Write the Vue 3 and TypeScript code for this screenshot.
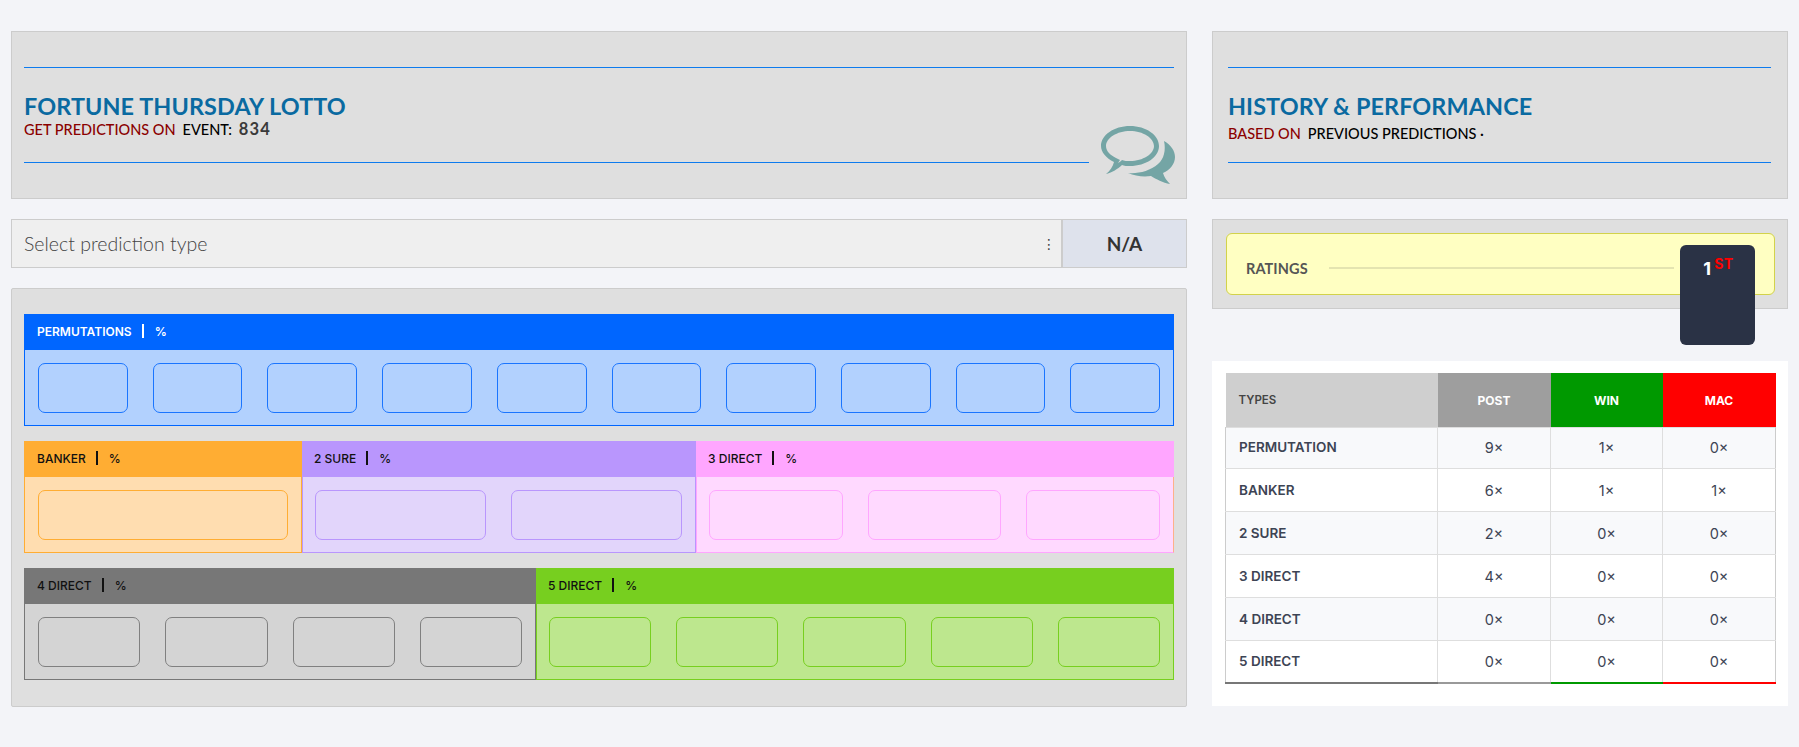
<script setup lang="ts">
interface Block { name: string; cls: string; count: number; basis: number; light?: boolean }
const rows: Block[][] = [
  [{ name: 'PERMUTATIONS', cls: 'blue', count: 10, basis: 1150, light: true }],
  [
    { name: 'BANKER', cls: 'orange', count: 1, basis: 278 },
    { name: '2 SURE', cls: 'purple', count: 2, basis: 394 },
    { name: '3 DIRECT', cls: 'pink', count: 3, basis: 478 },
  ],
  [
    { name: '4 DIRECT', cls: 'grey', count: 4, basis: 512 },
    { name: '5 DIRECT', cls: 'green', count: 5, basis: 638 },
  ],
]
const table: [string, string, string, string][] = [
  ['PERMUTATION', '9×', '1×', '0×'],
  ['BANKER', '6×', '1×', '1×'],
  ['2 SURE', '2×', '0×', '0×'],
  ['3 DIRECT', '4×', '0×', '0×'],
  ['4 DIRECT', '0×', '0×', '0×'],
  ['5 DIRECT', '0×', '0×', '0×'],
]
</script>

<template>
  <div class="page">
    <div class="col">
      <section class="card head-card">
        <div class="rule"></div>
        <div class="head-text">
          <h1>FORTUNE THURSDAY LOTTO</h1>
          <p class="sub">
            <span class="red">GET PREDICTIONS ON</span>
            <span class="black">EVENT:</span>
            <span class="num">834</span>
          </p>
        </div>
        <div class="rule short"></div>
        <svg class="chat" viewBox="0 0 74 58" width="74" height="58" aria-hidden="true">
          <path fill="#74a5a5" fill-rule="evenodd" d="M29 0C45 0 58 9 58 20C58 31 45 40 29 40C26 40 23 40 21 39C17 43 10 47 5 48C9 45 12 40 13 36C5 32 0 26 0 20C0 9 13 0 29 0ZM29 5C16 5 5 12 5 20C5 25 9 29 15 32L19 34L17 37C19 36 20 35 21 34C23 35 26 35 29 35C42 35 53 28 53 20C53 12 42 5 29 5Z" />
          <path fill="#74a5a5" d="M63 15C70 19 74 25 74 31C74 38 69 44 62 47C63 51 66 55 69 58C62 57 55 53 50 50C42 51 34 50 27 47C37 48 49 45 57 38C63 33 65 24 63 15Z" />
        </svg>
      </section>

      <div class="select">
        <span class="placeholder">Select prediction type</span>
        <span class="dots">⋮</span>
        <span class="na">N/A</span>
      </div>

      <section class="card panel">
        <div v-for="(row, i) in rows" :key="i" class="row">
          <div
            v-for="b in row"
            :key="b.name"
            class="block"
            :class="b.cls"
            :style="{ width: b.basis + 'px' }"
          >
            <div class="block-head" :class="{ light: b.light }">
              <span>{{ b.name }}</span>
              <i class="bar"></i>
              <span>%</span>
            </div>
            <div class="block-body">
              <div v-for="n in b.count" :key="n" class="slot"></div>
            </div>
          </div>
        </div>
      </section>
    </div>

    <div class="col">
      <section class="card head-card right">
        <div class="rule"></div>
        <div class="head-text">
          <h1>HISTORY &amp; PERFORMANCE</h1>
          <p class="sub lower">
            <span class="red">BASED ON</span>
            <span class="black">PREVIOUS PREDICTIONS ·</span>
          </p>
        </div>
        <div class="rule"></div>
      </section>

      <section class="card ratings">
        <div class="yellow">
          <span class="rt">RATINGS</span>
          <span class="rt-line"></span>
        </div>
        <div class="badge"><span class="one">1</span><span class="st">ST</span></div>
      </section>

      <section class="table-wrap">
        <table>
          <colgroup>
            <col class="c1" /><col class="c2" /><col class="c3" /><col class="c4" />
          </colgroup>
          <thead>
            <tr>
              <th class="t">TYPES</th>
              <th class="p">POST</th>
              <th class="w">WIN</th>
              <th class="m">MAC</th>
            </tr>
          </thead>
          <tbody>
            <tr v-for="r in table" :key="r[0]">
              <td class="name">{{ r[0] }}</td>
              <td class="pc">{{ r[1] }}</td>
              <td class="wc">{{ r[2] }}</td>
              <td class="mc">{{ r[3] }}</td>
            </tr>
          </tbody>
        </table>
      </section>
    </div>
  </div>
</template>

<style>
html, body { margin: 0; background: #f3f4f8; }
</style>

<style scoped>
.page {
  display: grid;
  grid-template-columns: 1176px 576px;
  column-gap: 25px;
  padding: 31px 0 0 11px;
  height: 716px;
  box-sizing: border-box;
  font-family: Lato, "Open Sans", sans-serif;
}
.col { display: flex; flex-direction: column; }
.card {
  background: #dfdfdf;
  border: 1px solid #ccc;
  box-sizing: border-box;
  position: relative;
}
.head-card { height: 168px; padding: 35px 12px 0; }
.head-card.right { padding: 35px 16px 0 15px; }
.rule { height: 1px; background: #0d7bee; }
.rule.short { margin-right: 85px; }
.head-text { height: 94px; box-sizing: border-box; padding: 26px 0 0 0; }
h1 {
  margin: 0;
  font-size: 23.4px;
  line-height: 25px;
  font-weight: 700;
  color: #0a6aa1;
  letter-spacing: 0.1px;
}
.sub {
  margin: 2px 0 0;
  font-size: 14.5px;
  line-height: 17px;
  display: flex;
  align-items: baseline;
  gap: 7px;
}
.sub.lower { margin-top: 6px; }
.red { color: #8b0000; font-weight: 500; }
.black { color: #000; font-weight: 500; }
.num { color: #3a3a3a; font-weight: 700; font-size: 16.5px; line-height: 14px; letter-spacing: 1.1px; }
.chat { position: absolute; left: 1089px; top: 94px; }

.select {
  margin-top: 20px;
  height: 49px;
  box-sizing: border-box;
  border: 1px solid #ccc;
  background: #efefef;
  display: flex;
  align-items: center;
  padding-left: 12px;
}
.placeholder { font-size: 19.5px; color: #444; font-weight: 300; flex: 1; }
.dots { font-size: 14px; color: #444; font-family: "DejaVu Sans", sans-serif; margin-right: 5px; }
.na {
  width: 125px;
  height: 100%;
  border-left: 2px solid #ccc;
  background: #dee2ec;
  box-sizing: border-box;
  display: flex;
  align-items: center;
  justify-content: center;
  font-weight: 700;
  font-size: 19px;
  color: #333;
}

.panel {
  margin-top: 20px;
  height: 419px;
  padding: 25px 12px 0;
  display: flex;
  flex-direction: column;
  gap: 15px;
  border-radius: 2px;
}
.row { display: flex; }
.block-head {
  height: 36px;
  box-sizing: border-box;
  display: flex;
  align-items: center;
  padding: 0 0 2px 13px;
  font-family: Inter, Roboto, sans-serif;
  font-size: 12px;
  font-weight: 500;
  color: #111;
}
.block + .block .block-head { padding-left: 12px; }
.block-head.light { color: #fff; font-weight: 600; }
.bar { width: 2px; height: 14px; background: currentColor; margin: 0 11px 0 10px; }
.block-body {
  height: 76px;
  box-sizing: border-box;
  border-width: 0 1px 1px;
  border-style: solid;
  padding: 13px 13px 0;
  display: flex;
  justify-content: space-between;
  gap: 25px;
}
.block + .block .block-body { padding-left: 12px; }
.slot { flex: 1; height: 50px; box-sizing: border-box; border-radius: 7px; border-width: 1px; border-style: solid; }

.blue .block-head { background: #0066ff; }
.blue .block-body { background: #b2d1fe; border-color: #0066ff; }
.blue .slot { border-color: #1a75ff; }
.orange .block-head { background: #ffad33; }
.orange .block-body { background: #ffddb0; border-color: #ffad33; }
.orange .slot { border-color: #ffad33; }
.purple .block-head { background: #b996fd; }
.purple .block-body { background: #e2d5fb; border-color: #b996fd; }
.purple .slot { border-color: #b996fd; }
.pink .block-head { background: #ffa6ff; }
.pink .block-body { background: #ffd9ff; border-color: #ffa6ff #ffb08a #ffa6ff #ffa6ff; }
.pink .slot { border-color: #ffa6ff; }
.grey .block-head { background: #777; }
.grey .block-body { background: #d4d4d4; border-color: #777; }
.grey .slot { border-color: #808080; }
.green .block-head { background: #77cf1f; }
.green .block-body { background: #bde78e; border-color: #77cf1f; }
.green .slot { border-color: #77cf1f; }

.ratings { margin-top: 20px; height: 90px; padding: 13px 12px 0 14px; }
.yellow {
  height: 62px;
  box-sizing: border-box;
  border: 1px solid #d2d24a;
  border-radius: 6px;
  background: #ffffc2;
  display: flex;
  align-items: center;
  padding: 8px 0 0 19px;
  margin-left: -1px;
}
.rt { font-size: 14.5px; font-weight: 700; color: #555; letter-spacing: 0.1px; }
.rt-line { width: 345px; height: 2px; background: #e4e4b0; margin-left: 21px; }
.badge {
  position: absolute;
  left: 467px;
  top: 25px;
  width: 75px;
  height: 100px;
  border-radius: 6px;
  background: #2a3245;
  text-align: center;
  padding: 13px 0 0 2px;
  box-sizing: border-box;
  font-family: Inter, Roboto, sans-serif;
  font-weight: 700;
}
.one { color: #fff; font-size: 18px; }
.st { color: #f00; font-size: 14px; position: relative; top: -6px; margin-left: 3px; letter-spacing: 0.5px; }

.table-wrap {
  margin-top: 52px;
  height: 345px;
  background: #fff;
  padding: 12px 12px 0 13px;
  box-sizing: border-box;
}
table {
  width: 550px;
  table-layout: fixed;
  border-collapse: collapse;
  font-family: Inter, Roboto, sans-serif;
}
.c1 { width: 212px; }
.c2 { width: 113px; }
.c3 { width: 112px; }
.c4 { width: 113px; }
th {
  height: 54px;
  padding: 0;
  font-size: 12px;
  font-weight: 700;
  color: #fff;
}
th.t { background: #cfcfcf; color: #444; text-align: left; padding-left: 13px; font-weight: 600; font-size: 11.5px; }
th.p { background: #9e9e9e; }
th.w { background: #009900; }
th.m { background: #ff0000; }
td {
  height: 43px;
  padding: 0;
  box-sizing: border-box;
  border: 1px solid #dedede;
  text-align: center;
  font-size: 14.5px;
  color: #3d4454;
}
tbody tr:first-child td { height: 41px; padding-bottom: 2px; }
td.name { text-align: left; padding-left: 13px; font-size: 13.5px; font-weight: 600; border-left-color: #ccc; }
td.mc { border-right-color: #ccc; }
tbody tr:nth-child(odd) td { background: #f8f9fb; }
tbody tr:nth-child(5) td { background: #f8f9fb; }
tbody tr:last-child td { border-bottom-width: 2px; height: 42px; background: #fff; }
tbody tr:last-child td.name { border-bottom-color: #777; }
tbody tr:last-child td.pc { border-bottom-color: #999; }
tbody tr:last-child td.wc { border-bottom-color: #009900; }
tbody tr:last-child td.mc { border-bottom-color: #ff0000; }
</style>
